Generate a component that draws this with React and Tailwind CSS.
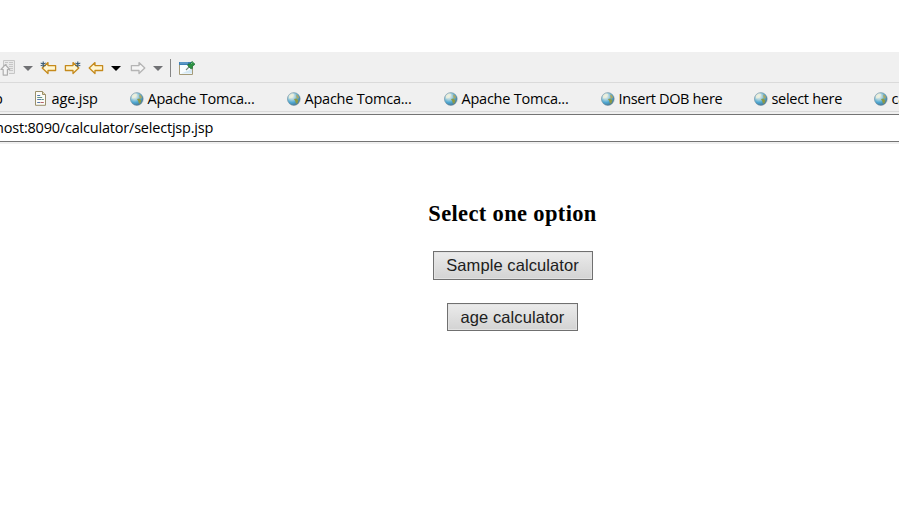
const ui = "font-['Open_Sans','Noto_Sans',sans-serif]";

function Globe() {
  return (
    <svg className="block h-[14px] w-[14px] shrink-0" viewBox="0 0 14 14">
      <defs>
        <radialGradient id="globe" cx="0.34" cy="0.28" r="0.8">
          <stop offset="0" stopColor="#f6f9ee" />
          <stop offset="0.3" stopColor="#b5d6de" />
          <stop offset="0.62" stopColor="#4fa8d2" />
          <stop offset="1" stopColor="#456f8c" />
        </radialGradient>
      </defs>
      <circle cx="6.8" cy="7" r="6.4" fill="url(#globe)" stroke="#6d8794" strokeWidth=".5" />
      <path d="M2.2 3.4 5 1.4l2.2 1L5.8 5l-2 1.2-2 .2z" fill="#eceedb" opacity=".85" />
      <path d="m7 7 2.6-.4 1.8 2-1.2 3.2-1.3-.6-.7-2.3z" fill="#8f9a42" />
      <path d="m9.2 2.6 1.5.5 1.4 2.4-1.4 1.6-1.3-1.9z" fill="#a9a765" />
    </svg>
  );
}

function PageIcon() {
  return (
    <svg className="block h-[15px] w-[14px] shrink-0" viewBox="0 0 14 15">
      <path d="M1.5.5h7l3 3v10.8h-10z" fill="#fcfcf7" stroke="#9a8f6b" />
      <path d="M8.5.5v3h3" fill="#e8dcae" stroke="#9a8f6b" />
      <path d="M3.2 4.5h3M3.2 8.5h4M3.2 11.5h3" stroke="#5577ad" />
      <path d="M3.2 6.5h5M7.5 8.5h2.3" stroke="#5f9385" />
      <path d="M6.5 11.5h3.3" stroke="#b5656c" />
    </svg>
  );
}

function Arrow({ className, flip, star, muted }) {
  return (
    <svg className={`block h-4 w-[18px] shrink-0 ${className}`} viewBox="0 0 18 16">
      <g transform={flip ? 'translate(18 0) scale(-1 1)' : undefined}>
        <path
          d="M2.2 8 8 2.6v3h7.6v4.9H8v3z"
          fill={muted ? '#f5f5f5' : '#fff6d2'}
          stroke={muted ? '#b4b4b4' : '#c58a1c'}
          strokeWidth="1.3"
          strokeLinejoin="round"
        />
        {star && <path d="M3.2 1.6v5.6M.7 2.9l5 3M.7 5.9l5-3" stroke="#34566f" strokeWidth="1.1" />}
      </g>
    </svg>
  );
}

function Caret({ className }) {
  return (
    <svg className={`block h-[5px] w-[10px] shrink-0 ${className}`} viewBox="0 0 10 5">
      <path d="M0 0h10L5 5z" fill="currentColor" />
    </svg>
  );
}

function UpPage() {
  return (
    <svg className="block h-4 w-4 shrink-0" viewBox="0 0 16 16">
      <path d="M3.5 6V.5h11v13H9" fill="#e9e9e9" stroke="#c6c6c6" />
      <path d="M5 2.5h3M5 4.5h2M9 2.5h4M9 4.5h4M9 6.5h4M9 8.5h4M9 10.5h4" stroke="#c6c6c6" />
      <path d="M5.3 4.7 9.6 9.5H7.4v5.6H3.2V9.5H1z" fill="#f4f4f4" stroke="#aeaeae" strokeWidth="1.2" strokeLinejoin="round" />
    </svg>
  );
}

function PinWindow() {
  return (
    <svg className="block h-4 w-[17px] shrink-0" viewBox="0 0 17 16">
      <path d="M.5 2.5h13v12H.5z" fill="#fafdff" stroke="#a49a78" />
      <path d="M0 2h14v3H0z" fill="#3f7fb4" />
      <path d="M1 3h8" stroke="#79b0d8" />
      <path d="M2 13.5h11V9z" fill="#d5e9f5" />
      <path d="m7 10 4-4" stroke="#76877a" strokeWidth="1.1" />
      <path d="m9 4.2 2-.2 2-2.6 3 2.8-2.5 2.1-.2 2.3-1.5.2-3-3z" fill="#2d9142" stroke="#1d6f34" strokeWidth=".7" />
      <path d="m12.1 4 1.3-1.5" stroke="#73c383" />
    </svg>
  );
}

const tabs = [
  { label: 'age.jsp', box: 'w-24', track: 'tracking-[-0.15px]', page: true },
  { label: 'Apache Tomca...', box: 'w-[157px]', track: 'tracking-[-0.23px]' },
  { label: 'Apache Tomca...', box: 'w-[157px]', track: 'tracking-[-0.23px]' },
  { label: 'Apache Tomca...', box: 'w-[157px]', track: 'tracking-[-0.23px]' },
  { label: 'Insert DOB here', box: 'w-[153px]', track: 'tracking-[-0.34px]' },
  { label: 'select here', box: 'w-[120px]', track: 'tracking-[-0.3px]' },
  { label: 'calculator', box: 'w-[120px]', track: 'tracking-[-0.3px]' },
];

export default function App() {
  return (
    <div className="h-[505px] w-[899px] overflow-hidden bg-white pt-[52px] text-black">
      <div className="flex h-[31px] items-center border-b border-[#dadada] bg-[#f0f0f0] pt-[2px]">
        <UpPage />
        <Caret className="ml-[7px] text-[#707174]" />
        <Arrow className="ml-[7px]" star />
        <Arrow className="ml-[5px]" flip star />
        <Arrow className="ml-[6px]" />
        <Caret className="ml-[6px] text-black" />
        <Arrow className="ml-2" flip muted />
        <Caret className="ml-[6px] text-[#707174]" />
        <div className="ml-[7px] h-[18px] w-px shrink-0 bg-[#858585]" />
        <div className="ml-2">
          <PinWindow />
        </div>
      </div>

      <div className={`flex h-[29px] items-center border-b border-[#dadada] bg-[#f0f0f0] pt-[3px] text-[14.5px] whitespace-nowrap ${ui}`}>
        <div className="flex w-[33.5px] shrink-0">
          <span className="-ml-[6px]">p</span>
        </div>
        {tabs.map((tab, i) => (
          <div key={i} className={`flex shrink-0 items-center gap-1 ${tab.box}`}>
            {tab.page ? <PageIcon /> : <Globe />}
            <span className={tab.track}>{tab.label}</span>
          </div>
        ))}
      </div>

      <div className="border-b-2 border-[#f0f0f0] bg-[#f0f0f0] pt-[2px]">
        <div className={`flex h-7 items-center border-y border-[#747474] bg-white text-[14.5px] tracking-[-0.2px] ${ui}`}>
          <span className="-ml-[5px]">host:8090/calculator/selectjsp.jsp</span>
        </div>
      </div>

      <div className="flex flex-col items-center pt-14 pl-[126px]">
        <h3 className="font-['Liberation_Serif',serif] text-[22.5px] leading-7 font-bold tracking-[0.35px] whitespace-nowrap">
          Select one option
        </h3>
        <button className="mt-[23px] h-[29px] w-40 border border-[#707070] bg-linear-to-b from-[#ebebeb] to-[#d3d3d3] font-['Liberation_Sans',sans-serif] text-[16.5px] tracking-[0.08px] whitespace-nowrap text-[#202020] shadow-[inset_0_0_0_1px_#e3e3e3]">
          Sample calculator
        </button>
        <button className="mt-[23px] h-7 w-[131px] border border-[#707070] bg-linear-to-b from-[#ebebeb] to-[#d3d3d3] font-['Liberation_Sans',sans-serif] text-[16.5px] tracking-[0.08px] whitespace-nowrap text-[#202020] shadow-[inset_0_0_0_1px_#e3e3e3]">
          age calculator
        </button>
      </div>
    </div>
  );
}
